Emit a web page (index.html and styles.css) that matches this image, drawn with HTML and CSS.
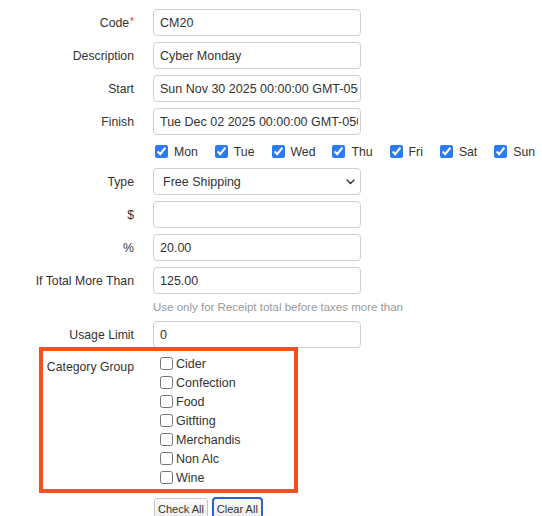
FILE: index.html
```html
<!DOCTYPE html>
<html lang="en">
<head>
    <meta charset="UTF-8">
    <meta name="viewport" content="width=device-width, initial-scale=1.0">
    <title>Edit Promotion</title>
    <link rel="stylesheet" href="styles.css">
</head>
<body>
    <form class="promo-form">
        <label class="field-label" for="code">Code<span class="required">*</span></label>
        <input class="field-input" type="text" id="code" value="CM20">

        <label class="field-label" for="description">Description</label>
        <input class="field-input" type="text" id="description" value="Cyber Monday">

        <label class="field-label" for="start">Start</label>
        <input class="field-input" type="text" id="start" value="Sun Nov 30 2025 00:00:00 GMT-0500 (Eastern Standard Time)">

        <label class="field-label" for="finish">Finish</label>
        <input class="field-input" type="text" id="finish" value="Tue Dec 02 2025 00:00:00 GMT-0500 (Eastern Standard Time)">

        <div class="day-list">
            <label class="day-item"><input type="checkbox" class="day-check" checked>Mon</label>
            <label class="day-item"><input type="checkbox" class="day-check" checked>Tue</label>
            <label class="day-item"><input type="checkbox" class="day-check" checked>Wed</label>
            <label class="day-item"><input type="checkbox" class="day-check" checked>Thu</label>
            <label class="day-item"><input type="checkbox" class="day-check" checked>Fri</label>
            <label class="day-item"><input type="checkbox" class="day-check" checked>Sat</label>
            <label class="day-item"><input type="checkbox" class="day-check" checked>Sun</label>
        </div>

        <label class="field-label" for="type">Type</label>
        <div class="select-wrap">
            <select class="field-input field-select" id="type">
                <option>Percent Off</option>
                <option selected>Free Shipping</option>
                <option>Amount Off</option>
            </select>
            <svg class="select-arrow" width="9" height="6" viewBox="0 0 9 6">
                <polyline points="1,1 4.5,4.5 8,1" fill="none" stroke="#333" stroke-width="1.4" stroke-linecap="round" stroke-linejoin="round"/>
            </svg>
        </div>

        <label class="field-label" for="amount">$</label>
        <input class="field-input" type="text" id="amount" value="">

        <label class="field-label" for="percent">%</label>
        <input class="field-input" type="text" id="percent" value="20.00">

        <label class="field-label" for="minTotal">If Total More Than</label>
        <input class="field-input" type="text" id="minTotal" value="125.00">

        <div class="help-text">Use only for Receipt total before taxes more than</div>

        <label class="field-label" for="usage">Usage Limit</label>
        <input class="field-input" type="text" id="usage" value="0">

        <div class="category-row">
            <div class="field-label category-label">Category Group</div>
            <div class="category-list">
                <label class="category-item"><input type="checkbox" class="category-check">Cider</label>
                <label class="category-item"><input type="checkbox" class="category-check">Confection</label>
                <label class="category-item"><input type="checkbox" class="category-check">Food</label>
                <label class="category-item"><input type="checkbox" class="category-check">Gitfting</label>
                <label class="category-item"><input type="checkbox" class="category-check">Merchandis</label>
                <label class="category-item"><input type="checkbox" class="category-check">Non Alc</label>
                <label class="category-item"><input type="checkbox" class="category-check">Wine</label>
            </div>
        </div>

        <div class="button-row">
            <button type="button" class="small-button">Check All</button>
            <button type="button" class="small-button focused">Clear All</button>
        </div>
    </form>
</body>
</html>
```

FILE: styles.css
```css
body {
    margin: 0;
    padding: 0;
    background: #fff;
    font-family: "Liberation Sans", Arial, Helvetica, sans-serif;
    font-size: 12.25px;
    color: #333;
}

.promo-form {
    display: grid;
    grid-template-columns: 126px 208px;
    column-gap: 19px;
    row-gap: 6px;
    padding: 9px 8px;
}

.field-label {
    align-self: center;
    text-align: right;
    white-space: nowrap;
    color: #333;
}

.required {
    color: #d9342b;
    font-size: 10px;
    vertical-align: top;
    margin-left: 1px;
}

.field-input {
    box-sizing: border-box;
    width: 208px;
    height: 27px;
    margin: 0;
    padding: 0 2px 0 6px;
    border: 1px solid #d0d0d0;
    border-radius: 4px;
    background: #fff;
    font-family: inherit;
    font-size: 12.5px;
    color: #333;
    outline: none;
}

.select-wrap {
    position: relative;
    width: 208px;
    height: 27px;
}

.field-select {
    appearance: none;
    -webkit-appearance: none;
    padding-left: 9px;
}

.select-arrow {
    position: absolute;
    right: 6px;
    top: 11px;
    pointer-events: none;
}

.day-list {
    grid-column: 2;
    display: flex;
    align-items: center;
    gap: 15px;
    height: 21px;
    width: max-content;
    font-size: 12.25px;
}

.day-item {
    display: flex;
    align-items: center;
    white-space: nowrap;
}

.day-check {
    width: 13px;
    height: 13px;
    margin: 0 6px 0 2px;
    accent-color: #2b7bf3;
}

.help-text {
    grid-column: 2;
    font-size: 11.5px;
    line-height: 15px;
    color: #999;
    white-space: nowrap;
}

/* category checkboxes share the two form columns */
.category-row {
    grid-column: 1 / -1;
    display: grid;
    grid-template-columns: 126px 208px;
    column-gap: 19px;
    position: relative;
}

/* highlight frame drawn around the group */
.category-row::after {
    content: "";
    position: absolute;
    left: 31px;
    top: -7px;
    width: 259px;
    height: 146px;
    box-sizing: border-box;
    border: 4px solid #f4511e;
    pointer-events: none;
}

.category-label {
    align-self: start;
    padding-top: 6px;
    line-height: 15px;
}

.category-list {
    display: flex;
    flex-direction: column;
    font-size: 12.5px;
}

.category-item {
    display: flex;
    align-items: center;
    height: 19px;
    white-space: nowrap;
}

.category-check {
    width: 13px;
    height: 13px;
    margin: 0 3px 0 7px;
}

.button-row {
    grid-column: 2;
    display: flex;
    gap: 5px;
    padding-left: 1px;
    margin-top: 5px;
}

.small-button {
    height: 22px;
    padding: 0 3px;
    border: 1px solid #c8c8c8;
    border-radius: 3px;
    background: linear-gradient(#fbfbfb, #ececec);
    font-family: inherit;
    font-size: 11px;
    color: #333;
    cursor: pointer;
}

.small-button.focused {
    outline: 2px solid #2a63d4;
    outline-offset: -1px;
}
```
